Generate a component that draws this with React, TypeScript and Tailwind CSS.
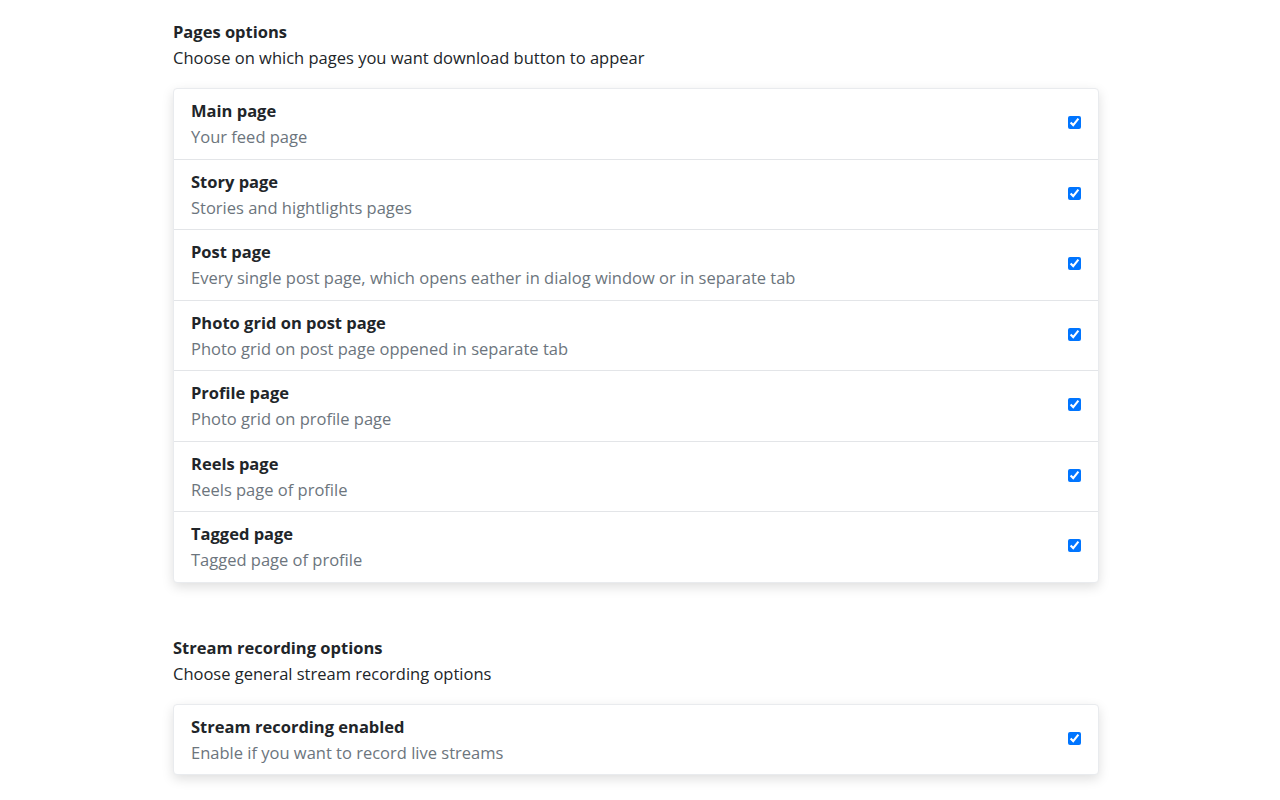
const pages = [
  { title: "Main page", desc: "Your feed page" },
  { title: "Story page", desc: "Stories and hightlights pages" },
  {
    title: "Post page",
    desc: "Every single post page, which opens eather in dialog window or in separate tab",
  },
  { title: "Photo grid on post page", desc: "Photo grid on post page oppened in separate tab" },
  { title: "Profile page", desc: "Photo grid on profile page" },
  { title: "Reels page", desc: "Reels page of profile" },
  { title: "Tagged page", desc: "Tagged page of profile" },
];

const stream = [{ title: "Stream recording enabled", desc: "Enable if you want to record live streams" }];

function OptionRow({ title, desc }: { title: string; desc: string }) {
  return (
    <label className="flex items-center justify-between border-b border-[#e3e5e8] pt-[10px] pb-[9.5px] pl-[17px] pr-[17px] last:border-b-0">
      <div className="flex flex-col">
        <span className="text-[16.5px] font-bold leading-6 text-[#212529]">{title}</span>
        <span className="mt-[2px] text-[16.5px] leading-6 text-[#6c757d]">{desc}</span>
      </div>
      <input type="checkbox" defaultChecked className="mb-[3px] h-[13px] w-[13px] accent-[#0075ff]" />
    </label>
  );
}

function Section({
  heading,
  sub,
  items,
}: {
  heading: string;
  sub: string;
  items: { title: string; desc: string }[];
}) {
  return (
    <section>
      <h2 className="text-[16.5px] font-bold leading-6 text-[#212529]">{heading}</h2>
      <p className="mt-[2px] text-[16.5px] leading-6 text-[#212529]">{sub}</p>
      <div className="mt-[18px] rounded border border-[#e9ebee] bg-white shadow-[0_4px_12px_rgba(0,0,0,0.13)]">
        {items.map((it) => (
          <OptionRow key={it.title} title={it.title} desc={it.desc} />
        ))}
      </div>
    </section>
  );
}

export default function App() {
  return (
    <div
      className="flex min-h-[800px] justify-center bg-white pr-2"
      style={{ fontFamily: '"Segoe UI", "Open Sans", "Noto Sans", sans-serif' }}
    >
      <div className="flex w-[926px] flex-col gap-[53px] pt-[20px] pb-6">
        <Section
          heading="Pages options"
          sub="Choose on which pages you want download button to appear"
          items={pages}
        />
        <Section
          heading="Stream recording options"
          sub="Choose general stream recording options"
          items={stream}
        />
      </div>
    </div>
  );
}
